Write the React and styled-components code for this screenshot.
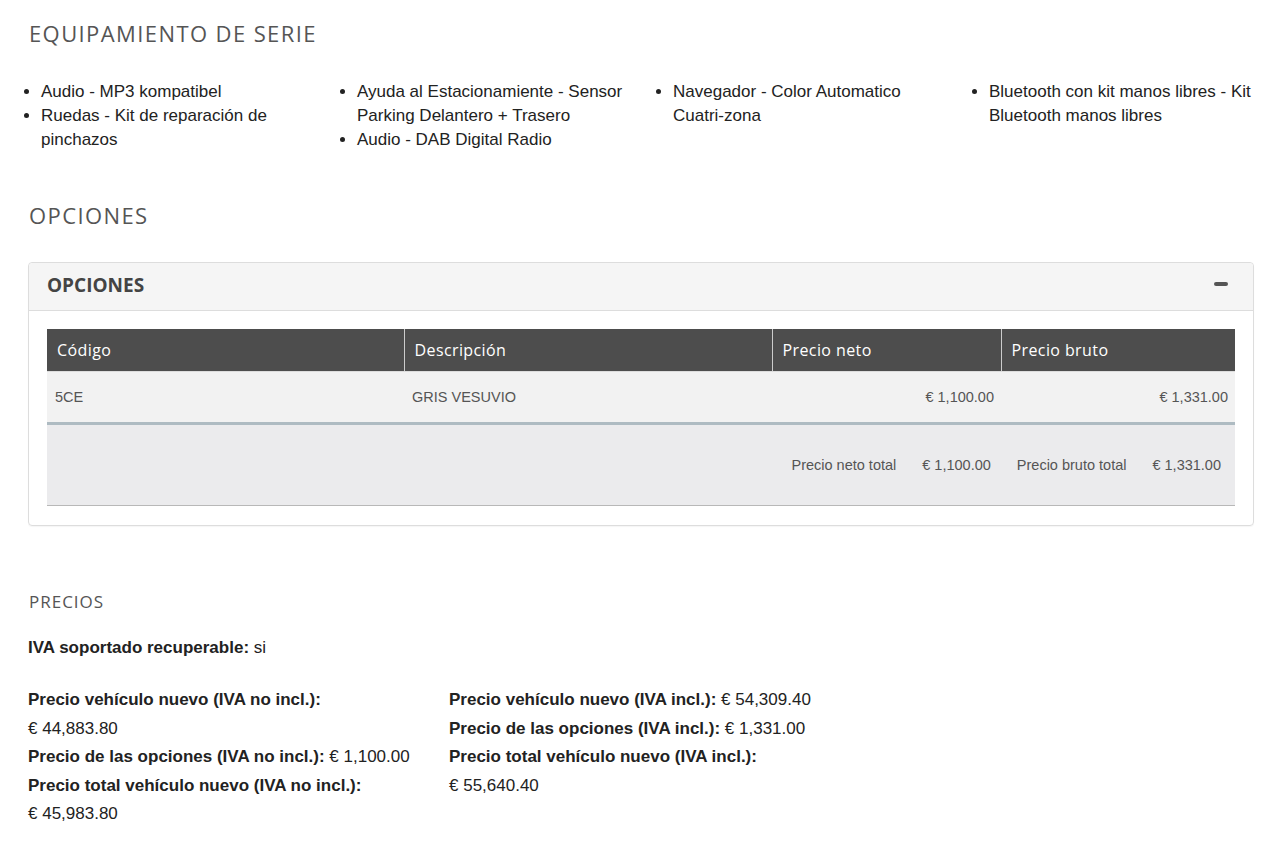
import React from 'react'
import styled, { createGlobalStyle } from 'styled-components'

const equipment = [
    ['Audio - MP3 kompatibel', 'Ruedas - Kit de reparación de pinchazos'],
    ['Ayuda al Estacionamiente - Sensor Parking Delantero + Trasero', 'Audio - DAB Digital Radio'],
    ['Navegador - Color Automatico Cuatri-zona'],
    ['Bluetooth con kit manos libres - Kit Bluetooth manos libres'],
]

const columns = [
    { key: 'code', title: 'Código', align: 'left' },
    { key: 'desc', title: 'Descripción', align: 'left' },
    { key: 'net', title: 'Precio neto', align: 'right' },
    { key: 'gross', title: 'Precio bruto', align: 'right' },
]

const options = [
    { code: '5CE', desc: 'GRIS VESUVIO', net: '€ 1,100.00', gross: '€ 1,331.00' },
]

const pricesLeft = [
    { label: 'Precio vehículo nuevo (IVA no incl.):', value: '€ 44,883.80', wrap: true },
    { label: 'Precio de las opciones (IVA no incl.):', value: '€ 1,100.00' },
    { label: 'Precio total vehículo nuevo (IVA no incl.):', value: '€ 45,983.80', wrap: true },
]

const pricesRight = [
    { label: 'Precio vehículo nuevo (IVA incl.):', value: '€ 54,309.40' },
    { label: 'Precio de las opciones (IVA incl.):', value: '€ 1,331.00' },
    { label: 'Precio total vehículo nuevo (IVA incl.):', value: '€ 55,640.40', wrap: true },
]

function PriceList({ items }) {
    return (
        <PriceCol>
            {items.map((p) => (
                <PriceLine key={p.label}>
                    <strong>{p.label}</strong>
                    <PriceValue $wrap={p.wrap}>{p.wrap ? p.value : ' ' + p.value}</PriceValue>
                </PriceLine>
            ))}
        </PriceCol>
    )
}

export default function App() {
    return (
        <Page>
            <GlobalStyle />
            <SectionTitle>EQUIPAMIENTO DE SERIE</SectionTitle>
            <EquipGrid>
                {equipment.map((col, i) => (
                    <EquipList key={i}>
                        {col.map((item) => <li key={item}>{item}</li>)}
                    </EquipList>
                ))}
            </EquipGrid>

            <SectionTitle $top={48}>OPCIONES</SectionTitle>
            <Panel>
                <PanelHeader>
                    <PanelTitle>OPCIONES</PanelTitle>
                    <Collapse aria-label="Contraer" />
                </PanelHeader>
                <PanelBody>
                    <Table>
                        <colgroup>
                            <col style={{ width: 357 }} />
                            <col style={{ width: 368 }} />
                            <col style={{ width: 229 }} />
                            <col />
                        </colgroup>
                        <thead>
                            <tr>
                                {columns.map((c) => <Th key={c.key}>{c.title}</Th>)}
                            </tr>
                        </thead>
                        <tbody>
                            {options.map((o) => (
                                <tr key={o.code}>
                                    {columns.map((c) => (
                                        <Td key={c.key} $align={c.align}>{o[c.key]}</Td>
                                    ))}
                                </tr>
                            ))}
                        </tbody>
                    </Table>
                    <Totals>
                        <span>Precio neto total</span>
                        <span>€ 1,100.00</span>
                        <span>Precio bruto total</span>
                        <span>€ 1,331.00</span>
                    </Totals>
                </PanelBody>
            </Panel>

            <SubTitle>PRECIOS</SubTitle>
            <Recoverable><strong>IVA soportado recuperable:</strong> si</Recoverable>
            <PriceGrid>
                <PriceList items={pricesLeft} />
                <PriceList items={pricesRight} />
            </PriceGrid>
        </Page>
    )
}

const GlobalStyle = createGlobalStyle`
    body {
        margin: 0;
        background: #fff;
        font-family: "Liberation Sans", Arial, sans-serif;
        color: #222;
    }
`

const Page = styled.div`
    padding: 0 26px 40px 28px;
`

const SectionTitle = styled.h2`
    margin: ${(p) => p.$top || 18}px 0 0 1px;
    font-family: "Open Sans", sans-serif;
    font-weight: 400;
    font-size: 22px;
    letter-spacing: 1.4px;
    line-height: 30px;
    color: #555;
`

const EquipGrid = styled.div`
    display: grid;
    grid-template-columns: repeat(4, 316px);
    margin: 32px 0 0 -6px;
`

const EquipList = styled.ul`
    margin: 0;
    padding-left: 19px;
    font-size: 17px;
    line-height: 24px;
    color: #222;

    li {
        padding-right: 27px;
    }
`

const Panel = styled.div`
    margin-top: 32px;
    border: 1px solid #ddd;
    border-radius: 4px;
    box-shadow: 0 1px 1px rgba(0, 0, 0, 0.04);
`

const PanelHeader = styled.div`
    box-sizing: border-box;
    display: flex;
    align-items: center;
    justify-content: space-between;
    height: 48px;
    padding: 0 25px 3px 18px;
    background: #f5f5f5;
    border-bottom: 1px solid #ddd;
    border-radius: 4px 4px 0 0;
`

const PanelTitle = styled.h3`
    margin: 0;
    font-family: "Open Sans", sans-serif;
    font-weight: 700;
    font-size: 19px;
    line-height: 26px;
    color: #444;
`

const Collapse = styled.span`
    display: block;
    width: 14px;
    height: 4px;
    margin-bottom: 3px;
    border-radius: 2px;
    background: #555;
`

const PanelBody = styled.div`
    padding: 18px 18px 19px;
`

const Table = styled.table`
    width: 100%;
    border-collapse: collapse;
    table-layout: fixed;
    border-bottom: 3px solid #aebbc2;
`

const Th = styled.th`
    height: 42px;
    padding: 0 10px;
    background: #4d4d4d;
    color: #fff;
    text-align: left;
    font-family: "Open Sans", sans-serif;
    font-weight: 400;
    font-size: 16px;
    letter-spacing: 0.4px;
    border-left: 1px solid #ccc;
    border-bottom: 1px solid #ddd;

    &:first-child {
        border-left: none;
    }
`

const Td = styled.td`
    height: 50px;
    padding: 0 7px 0 8px;
    background: #f2f2f2;
    color: #555;
    font-size: 14.5px;
    text-align: ${(p) => p.$align};
`

const Totals = styled.div`
    display: flex;
    justify-content: flex-end;
    align-items: center;
    gap: 26px;
    height: 80px;
    padding: 0 14px 0 0;
    background: #ebebed;
    border-bottom: 1px solid #b8b8b8;
    color: #555;
    font-size: 14.5px;
`

const SubTitle = styled.h4`
    margin: 63px 0 0 1px;
    font-family: "Open Sans", sans-serif;
    font-weight: 400;
    font-size: 17px;
    letter-spacing: 1px;
    line-height: 26px;
    color: #555;
`

const Recoverable = styled.p`
    margin: 21px 0 0;
    font-size: 17px;
    line-height: 24px;
`

const PriceGrid = styled.div`
    display: grid;
    grid-template-columns: 421px auto;
    margin-top: 26px;
`

const PriceCol = styled.div`
    font-size: 17px;
    line-height: 28.5px;
`

const PriceLine = styled.div``

const PriceValue = styled.span`
    display: ${(p) => (p.$wrap ? 'block' : 'inline')};
    white-space: pre;
`
